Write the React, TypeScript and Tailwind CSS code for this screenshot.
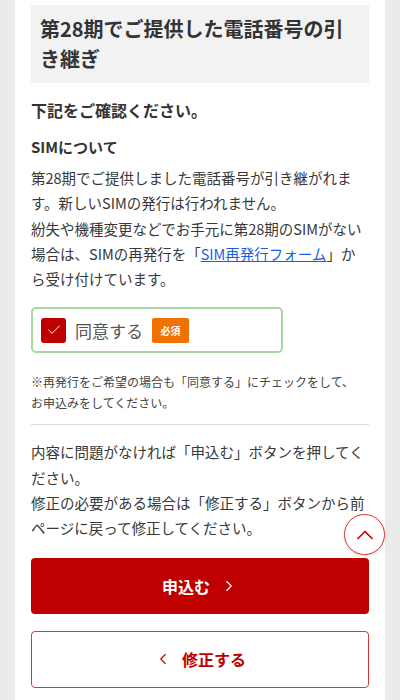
import { Check, ChevronRight, ChevronLeft, ChevronUp } from "lucide-react";

const font = { fontFamily: '"Noto Sans CJK JP", "Noto Sans", sans-serif' };

// reference wraps at fixed points, so each line is kept on its own
function Lines({ lines, className }: { lines: React.ReactNode[]; className: string }) {
  return (
    <p className={className}>
      {lines.map((l, i) => (
        <span key={i} className="block whitespace-nowrap">
          {l}
        </span>
      ))}
    </p>
  );
}

export default function App() {
  return (
    <div className="min-h-[700px] bg-[#ebebeb] px-[15px]" style={font}>
      <div className="relative bg-white px-[16px] pt-[5px] pb-[30px] text-[#333]">
        {/* Title */}
        <div className="bg-[#f2f2f2] px-[9px] py-[9px]">
          <h1 className="text-[20px] font-bold leading-[30px] text-[#333]">
            第28期でご提供した電話番号の引き継ぎ
          </h1>
        </div>

        <p className="mt-[14px] text-[16px] font-bold leading-[26px]">下記をご確認ください。</p>

        <h2 className="mt-[12px] text-[15px] font-bold leading-[24px]">SIMについて</h2>
        <Lines
          className="mt-[6px] text-[14.5px] leading-[25.3px] text-[#383838]"
          lines={[
            "第28期でご提供しました電話番号が引き継がれま",
            "す。新しいSIMの発行は行われません。",
            "紛失や機種変更などでお手元に第28期のSIMがない",
            <>
              場合は、SIMの再発行を「
              <a href="#" className="text-[#1a5fe0] underline">
                SIM再発行フォーム
              </a>
              」か
            </>,
            "ら受け付けています。",
          ]}
        />

        {/* Agreement */}
        <label className="mt-[16px] flex h-[46px] w-[252px] items-center gap-[9px] rounded-[5px] border-2 border-[#a6d7a3] pl-[8px]">
          <span className="flex h-[25px] w-[25px] items-center justify-center rounded-[3px] bg-[#bf0000]">
            <Check className="h-[16px] w-[16px] text-white" strokeWidth={1.5} />
          </span>
          <span className="text-[17px] leading-none text-[#555]">同意する</span>
          <span className="flex h-[25px] w-[37px] items-center justify-center rounded-[2px] bg-[#f07000] text-[10px] font-bold text-white">
            必須
          </span>
        </label>

        <Lines
          className="mt-[18px] text-[12px] leading-[21px] text-[#444]"
          lines={[
            "※再発行をご希望の場合も「同意する」にチェックをして、",
            "お申込みをしてください。",
          ]}
        />

        <hr className="mt-[11px] border-t border-[#d9d9d9]" />

        <Lines
          className="mt-[14px] text-[14.5px] leading-[25.3px] text-[#383838]"
          lines={[
            "内容に問題がなければ「申込む」ボタンを押してく",
            "ださい。",
            "修正の必要がある場合は「修正する」ボタンから前",
            "ページに戻って修正してください。",
          ]}
        />

        {/* Buttons */}
        <button className="mt-[17px] flex h-[56px] w-full items-center justify-center gap-[10px] rounded-[4px] bg-[#bf0000] text-[16px] font-bold text-white">
          申込む
          <ChevronRight className="h-[22px] w-[18px]" strokeWidth={1.5} />
        </button>
        <button className="mt-[17px] flex h-[57px] w-full items-center justify-center gap-[10px] rounded-[4px] border border-[#d03a3a] bg-white text-[16px] font-bold text-[#bf0000]">
          <ChevronLeft className="h-[22px] w-[18px]" strokeWidth={1.5} />
          修正する
        </button>

        {/* Back to top */}
        <button className="absolute left-[329px] top-[514px] flex h-[41px] w-[41px] items-center justify-center rounded-full border border-[#d33] bg-white shadow-[0_1px_3px_rgba(0,0,0,0.15)]">
          <ChevronUp className="h-[28px] w-[28px] text-[#c00]" strokeWidth={1.5} />
        </button>
      </div>
    </div>
  );
}
